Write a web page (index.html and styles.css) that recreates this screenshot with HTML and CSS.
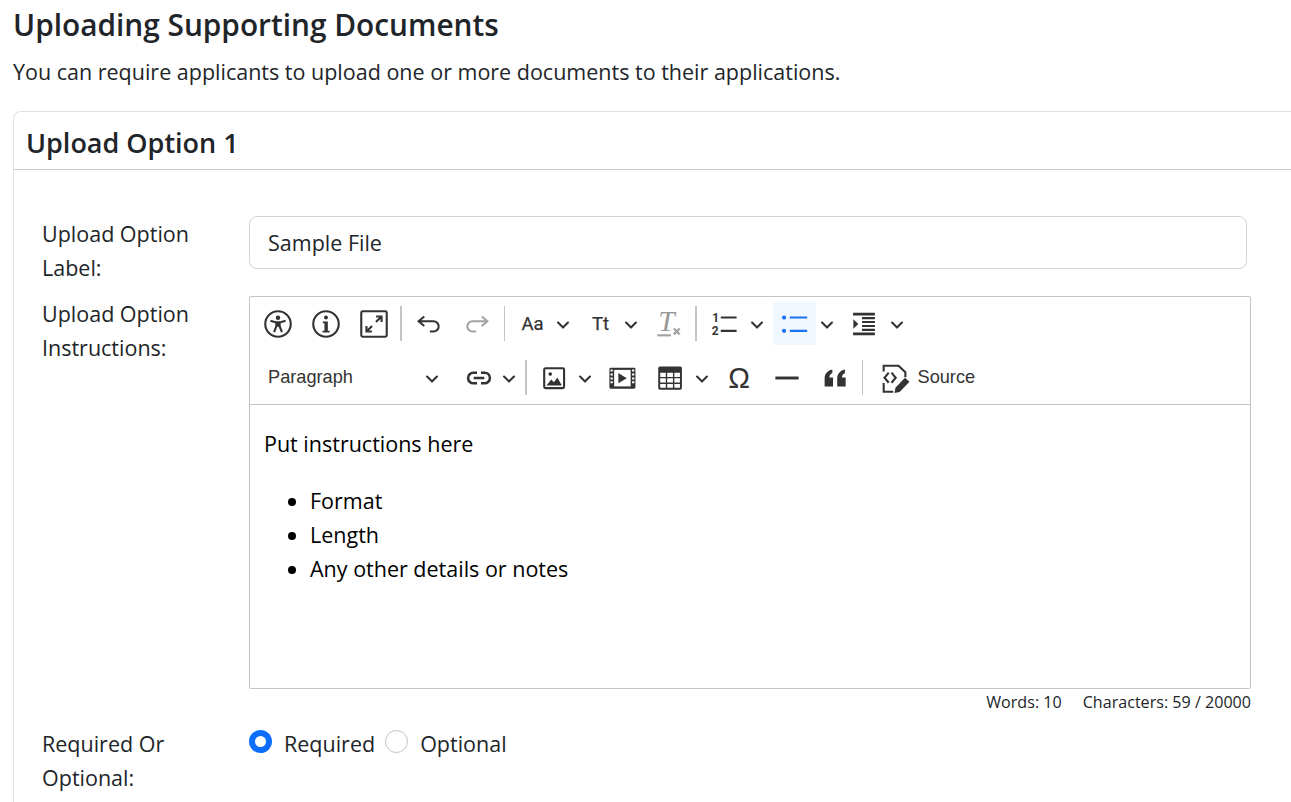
FILE: index.html
```html
<!DOCTYPE html>
<html lang="en">
<head>
<meta charset="utf-8">
<title>Uploading Supporting Documents</title>
<link rel="stylesheet" href="styles.css">
</head>
<body>
<main class="page">
  <h1 class="page-title">Uploading Supporting Documents</h1>
  <p class="page-lead">You can require applicants to upload one or more documents to their applications.</p>

  <section class="card">
    <h2 class="card-header">Upload Option 1</h2>
    <div class="card-body">
      <div class="form-row row-label">
        <label class="form-label">Upload Option Label:</label>
        <input class="text-input" type="text" value="Sample File">
      </div>

      <div class="form-row row-editor">
        <label class="form-label">Upload Option Instructions:</label>
        <div class="editor-wrap">
          <div class="editor">
            <div class="toolbar">
              <div class="tb-row">
                <button class="tb-btn"><svg class="ico" viewBox="0 0 20 20"><circle class="ln" cx="10" cy="10" r="9.1"/><circle class="fl" cx="10" cy="5.5" r="1.6"/><path class="ln" d="M4.6 7.6 8.2 8.7h3.6l3.6-1.1M8.9 9v2.4L7.2 15.8M11.1 9v2.4l1.7 4.4"/><path class="fl" d="M8.4 8.5h3.2v3.4H8.4z"/></svg></button>
                <button class="tb-btn"><svg class="ico" viewBox="0 0 20 20"><circle class="ln" cx="10" cy="10" r="9.1"/><circle class="fl" cx="10" cy="5.4" r="1.4"/><path class="fl" d="M7.7 8.2h3.6v6.6h1.3v1.3H7.5v-1.3h1.4V9.5H7.7z"/></svg></button>
                <button class="tb-btn"><svg class="ico" viewBox="0 0 20 20"><rect class="ln" x=".9" y=".9" width="18.2" height="18.2" rx="1"/><path class="ln" d="M11.5 4.6h3.9v3.9M15.2 4.8l-3.8 3.8M4.6 11.5v3.9h3.9M4.8 15.2l3.8-3.8"/></svg></button>
                <span class="tb-sep"></span>
                <button class="tb-btn"><svg class="ico" viewBox="0 0 20 20"><path class="ln" d="M6.6 4.6 2.6 8l4 3.4M2.8 8h10.4a3.7 3.7 0 0 1 0 7.4h-2.6"/></svg></button>
                <button class="tb-btn is-off"><svg class="ico" viewBox="0 0 20 20"><path class="ln" d="M13.4 4.6l4 3.4-4 3.4M17.2 8H6.8a3.7 3.7 0 0 0 0 7.4h2.6"/></svg></button>
                <span class="tb-sep"></span>
                <button class="tb-btn tb-drop"><span class="ico ico-text">Aa</span><svg class="chev" viewBox="0 0 10 10"><path d="M.941 4.523a.75.75 0 1 1 1.06-1.06l3.006 3.005 3.005-3.005a.75.75 0 1 1 1.06 1.06l-3.549 3.55a.75.75 0 0 1-1.168-.136L.941 4.523z"/></svg></button>
                <button class="tb-btn tb-drop"><span class="ico ico-text">Tt</span><svg class="chev" viewBox="0 0 10 10"><path d="M.941 4.523a.75.75 0 1 1 1.06-1.06l3.006 3.005 3.005-3.005a.75.75 0 1 1 1.06 1.06l-3.549 3.55a.75.75 0 0 1-1.168-.136L.941 4.523z"/></svg></button>
                <button class="tb-btn is-off tb-clear"><svg class="ico" viewBox="0 0 20 20"><text class="ico-t" x="2.4" y="15">T</text><path class="ln" d="M1.6 18.1h9.8"/><path class="ln ln-x" d="M13.4 13.2l4.2 4.2M17.6 13.2l-4.2 4.2"/></svg></button>
                <span class="tb-sep"></span>
                <button class="tb-btn tb-split"><svg class="ico" viewBox="0 0 20 20"><text class="ico-n" x="1.6" y="8.4">1</text><text class="ico-n" x="1.2" y="17.9">2</text><path class="ln" d="M7.7 5.4H19M7.7 14.9H19"/></svg></button>
                <button class="tb-arrow arrow-wide"><svg class="chev" viewBox="0 0 10 10"><path d="M.941 4.523a.75.75 0 1 1 1.06-1.06l3.006 3.005 3.005-3.005a.75.75 0 1 1 1.06 1.06l-3.549 3.55a.75.75 0 0 1-1.168-.136L.941 4.523z"/></svg></button>
                <button class="tb-btn tb-split is-on"><svg class="ico" viewBox="0 0 20 20"><circle class="fl" cx="2.9" cy="5.4" r="1.5"/><circle class="fl" cx="2.9" cy="14.9" r="1.5"/><path class="ln" d="M7 5.4h12.4M7 14.9h12.4"/></svg></button>
                <button class="tb-arrow arrow-wide"><svg class="chev" viewBox="0 0 10 10"><path d="M.941 4.523a.75.75 0 1 1 1.06-1.06l3.006 3.005 3.005-3.005a.75.75 0 1 1 1.06 1.06l-3.549 3.55a.75.75 0 0 1-1.168-.136L.941 4.523z"/></svg></button>
                <button class="tb-btn tb-split"><svg class="ico" viewBox="0 0 20 20"><path class="ln ln-thick" d="M2.2 2.9h15.6M2.2 17.1h15.6"/><path class="ln" d="M8.6 5.8h9.2M8.6 8.6h9.2M8.6 11.4h9.2M8.6 14.2h9.2"/><path class="fl" d="M2.4 6.6 6 10l-3.6 3.4z"/></svg></button>
                <button class="tb-arrow arrow-wide"><svg class="chev" viewBox="0 0 10 10"><path d="M.941 4.523a.75.75 0 1 1 1.06-1.06l3.006 3.005 3.005-3.005a.75.75 0 1 1 1.06 1.06l-3.549 3.55a.75.75 0 0 1-1.168-.136L.941 4.523z"/></svg></button>
              </div>
              <div class="tb-row">
                <button class="tb-heading"><span class="tb-label">Paragraph</span><svg class="chev" viewBox="0 0 10 10"><path d="M.941 4.523a.75.75 0 1 1 1.06-1.06l3.006 3.005 3.005-3.005a.75.75 0 1 1 1.06 1.06l-3.549 3.55a.75.75 0 0 1-1.168-.136L.941 4.523z"/></svg></button>
                <button class="tb-btn tb-split"><svg class="ico" viewBox="0 0 20 20"><path class="ln ln-link" d="M8.6 6.2H6a3.8 3.8 0 0 0 0 7.6h2.6M11.4 6.2H14a3.8 3.8 0 0 1 0 7.6h-2.6M6.2 10h7.6"/></svg></button>
                <button class="tb-arrow"><svg class="chev" viewBox="0 0 10 10"><path d="M.941 4.523a.75.75 0 1 1 1.06-1.06l3.006 3.005 3.005-3.005a.75.75 0 1 1 1.06 1.06l-3.549 3.55a.75.75 0 0 1-1.168-.136L.941 4.523z"/></svg></button>
                <span class="tb-sep"></span>
                <button class="tb-btn tb-split"><svg class="ico" viewBox="0 0 20 20"><rect class="ln" x="3" y="3" width="14.2" height="14.2" rx="1"/><circle class="fl" cx="7.3" cy="7.2" r="1.3"/><path class="fl" d="M4.6 15.4 8 11l2 2 2.4-3.4 3.2 5.8z"/></svg></button>
                <button class="tb-arrow"><svg class="chev" viewBox="0 0 10 10"><path d="M.941 4.523a.75.75 0 1 1 1.06-1.06l3.006 3.005 3.005-3.005a.75.75 0 1 1 1.06 1.06l-3.549 3.55a.75.75 0 0 1-1.168-.136L.941 4.523z"/></svg></button>
                <button class="tb-btn"><svg class="ico" viewBox="0 0 20 20"><rect class="fl" x="1" y="2.6" width="18.6" height="15" rx="1"/><path class="wh" d="M4.4 4.2h11.8v11.8H4.4z"/><path class="fl" d="M7.4 6.4l6 3.7-6 3.7z"/><path class="wh" d="M1.8 4h1.6v1.4H1.8zM1.8 6.8h1.6v1.4H1.8zM1.8 9.6h1.6V11H1.8zM1.8 12.4h1.6v1.4H1.8zM17.2 4h1.6v1.4h-1.6zM17.2 6.8h1.6v1.4h-1.6zM17.2 9.6h1.6V11h-1.6zM17.2 12.4h1.6v1.4h-1.6z"/></svg></button>
                <button class="tb-btn tb-split"><svg class="ico" viewBox="0 0 20 20"><rect class="fl" x="1.6" y="1.8" width="16.9" height="16.6" rx="1.2"/><path class="wh" d="M3 6.2h4v3.1H3zM8 6.2h4.1v3.1H8zM13.1 6.2h4v3.1h-4zM3 10.2h4v3.1H3zM8 10.2h4.1v3.1H8zM13.1 10.2h4v3.1h-4zM3 14.2h4V17H3zM8 14.2h4.1V17H8zM13.1 14.2h4V17h-4z"/></svg></button>
                <button class="tb-arrow arrow-table"><svg class="chev" viewBox="0 0 10 10"><path d="M.941 4.523a.75.75 0 1 1 1.06-1.06l3.006 3.005 3.005-3.005a.75.75 0 1 1 1.06 1.06l-3.549 3.55a.75.75 0 0 1-1.168-.136L.941 4.523z"/></svg></button>
                <button class="tb-btn"><span class="ico ico-omega">Ω</span></button>
                <button class="tb-btn"><svg class="ico" viewBox="0 0 20 20"><path class="ln ln-hr" d="M1.7 10h16.6"/></svg></button>
                <button class="tb-btn"><svg class="ico" viewBox="0 0 20 20"><path class="fl" d="M2.6 16V10.2c0-3.2 2.3-5.6 5.5-6.2v2.4C6.8 6.9 6 8 6 9.6h2.6V16zM11.6 16V10.2c0-3.2 2.3-5.6 5.5-6.2v2.4C15.8 6.9 15 8 15 9.6h2.6V16z"/></svg></button>
                <span class="tb-sep"></span>
                <button class="tb-source"><svg class="ico" viewBox="0 0 20 20"><path class="ln" d="M1.2 5.4V1.2h10.6l4.9 4.7v3.6M1.2 13.6v6.2H8"/><path class="ln" d="M4.8 6.2 1.8 9.8l3 3.6M6.8 6.2l3 3.6-3 3.6"/><path class="fl" d="M16.4 9.8l3.2 2.8-7 7.4-3.6.8.6-3.8z"/></svg><span class="tb-label">Source</span></button>
              </div>
            </div>
            <div class="editor-content">
              <p class="editor-p">Put instructions here</p>
              <ul class="editor-list">
                <li>Format</li>
                <li>Length</li>
                <li>Any other details or notes</li>
              </ul>
            </div>
          </div>
          <div class="word-count"><span>Words: 10</span><span>Characters: 59 / 20000</span></div>
        </div>
      </div>

      <div class="form-row">
        <label class="form-label">Required Or Optional:</label>
        <div class="radios">
          <label class="radio"><input class="radio-input" type="radio" name="req" checked><span>Required</span></label>
          <label class="radio"><input class="radio-input" type="radio" name="req"><span>Optional</span></label>
        </div>
      </div>
    </div>
  </section>
</main>
</body>
</html>
```

FILE: styles.css
```css
* { box-sizing: border-box; }

html, body {
  margin: 0;
  height: 802px;
  overflow: hidden;
  background: #fff;
}

body {
  font-family: "Open Sans", "Noto Sans", sans-serif;
  font-size: 21.5px;
  line-height: 34px;
  color: #212529;
}

.page { padding: 0 0 0 13px; }

.page-title {
  margin: 0;
  padding-top: 6px;
  font-size: 29.8px;
  font-weight: 600;
  line-height: 38px;
}

.page-lead { margin: 11px 0 22px; height: 34px; }

.card {
  height: 691px;
  border: 1px solid #dfe1e3;
  border-width: 1px 0 0 1px;
  border-radius: 8px 0 0 0;
  background: #fff;
}

.card-header {
  margin: 0;
  height: 58px;
  padding-left: 12px;
  border-bottom: 1px solid #c9cbcd;
  font-size: 27px;
  font-weight: 600;
  line-height: 62px;
}

.card-body { padding: 46px 0 0 29px; }

.form-row { display: flex; align-items: flex-start; }
.row-label { height: 80px; }
.row-editor { height: 430px; }

.form-label { flex: 0 0 207px; width: 207px; margin-left: -1px; padding: 1px 30px 0 0; }

.text-input {
  width: 998px;
  height: 53px;
  padding: 0 18px;
  border: 1px solid #ced4da;
  border-radius: 8px;
  font: inherit;
  color: #212529;
  background: #fff;
}

.editor-wrap { width: 1002px; }

.editor { border: 1px solid #c4c4c4; border-radius: 2px; height: 393px; }

.toolbar {
  height: 108px;
  padding: 5px 0 0 6px;
  border-bottom: 1px solid #c4c4c4;
}

.tb-row { display: flex; align-items: center; height: 43px; margin-bottom: 11px; }

.tb-btn, .tb-arrow, .tb-heading, .tb-source {
  display: flex;
  align-items: center;
  height: 43px;
  padding: 0;
  border: 0;
  background: transparent;
  color: #333;
  font-family: "Liberation Sans", Arial, sans-serif;
}

.tb-btn { flex: 0 0 43px; width: 43px; justify-content: center; margin-right: 5px; }
.tb-drop { flex-basis: 63px; width: 63px; justify-content: flex-start; padding-left: 7.5px; }
.tb-drop .chev { margin-left: 9px; }
.tb-split { margin-right: 0; }
.tb-clear { padding-left: 1px; }

.tb-arrow { flex: 0 0 20px; width: 20px; padding-left: 2px; margin-right: 5px; }
.arrow-wide { flex-basis: 22px; width: 22px; padding-left: 4px; }
.arrow-table { flex-basis: 22px; width: 22px; margin-right: 4px; padding-left: 3px; }

.tb-heading { flex: 0 0 196px; width: 196px; padding-left: 12px; margin-right: 5px; justify-content: space-between; padding-right: 13px; }
.tb-source { padding-left: 12.5px; }
.tb-label { font-size: 18.2px; line-height: 22px; padding-bottom: 2px; color: #333; }
.tb-source .tb-label { margin-left: 8px; }

.tb-sep { flex: 0 0 1.5px; width: 1.5px; height: 35px; margin-right: 6px; background: #c4c4c4; }

.ico { flex: 0 0 28px; width: 28px; height: 28px; display: block; overflow: visible; }
.chev { flex: 0 0 14px; width: 14px; height: 14px; display: block; fill: #333; }

.ln { fill: none; stroke: #333; stroke-width: 1.5; }
.ln-thick { stroke-width: 2; }
.ln-link { stroke-width: 1.8; }
.ln-hr { stroke-width: 2.1; }
.ln-x { stroke-width: 1.7; }
.fl { fill: #333; }
.wh { fill: #fff; }

.ico-text {
  font-family: Roboto, "Liberation Sans", sans-serif;
  font-weight: 400;
  font-size: 18.5px;
  line-height: 28px;
  text-align: center;
  color: #333;
  -webkit-text-stroke: .25px #333;
}

.ico-omega {
  font-family: "Liberation Sans", sans-serif;
  font-size: 29px;
  line-height: 28px;
  text-align: center;
  color: #333;
}

.ico-t { font-family: "Liberation Serif", serif; font-style: italic; font-size: 21px; fill: #999; }
.ico-n { font-family: Roboto, "Liberation Sans", sans-serif; font-weight: 700; font-size: 8.5px; fill: #333; }

.is-off .ln { stroke: #a3a3a3; }

.is-on { background: #f0f7ff; }
.is-on .ln { stroke: #1a73f0; }
.is-on .fl { fill: #1a73f0; }

.editor-content { padding: 22px 14px 0; color: #000; }
.editor-p { margin: 0 0 23px; }
.editor-list { margin: 0; padding-left: 46px; }

.word-count {
  display: flex;
  justify-content: flex-end;
  gap: 21px;
  font-size: 16.1px;
  line-height: 26px;
}

.radios { display: flex; align-items: center; height: 36px; }
.radio { display: flex; align-items: center; margin-right: 10px; }
.radio-input {
  appearance: none;
  width: 23px;
  height: 23px;
  margin: 0 12px 6px 0;
  border: 1px solid #bfc3c7;
  border-radius: 50%;
  background: #fff;
}
.radio-input:checked { border: 6.5px solid #0d6efd; }
```
